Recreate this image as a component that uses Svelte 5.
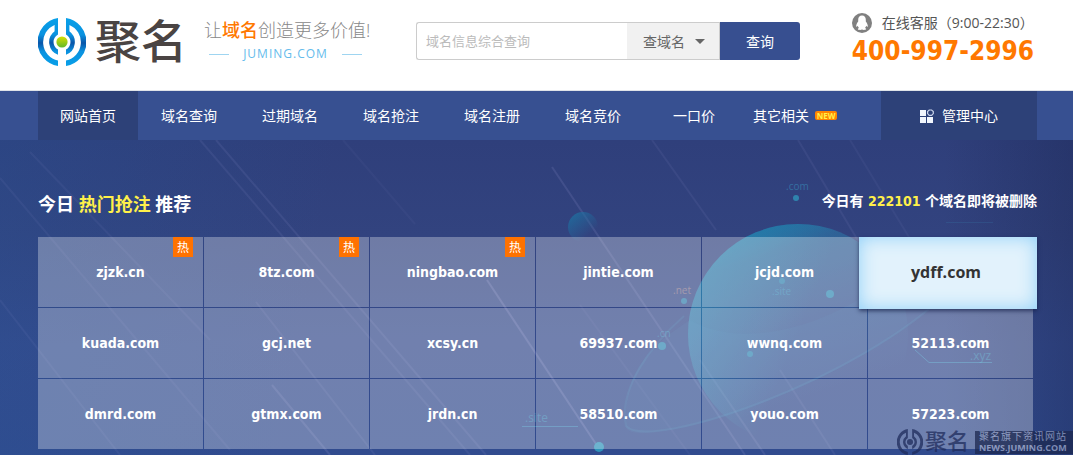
<script lang="ts">
    type Domain = { name: string; hot?: boolean; active?: boolean };

    const menu = ['网站首页', '域名查询', '过期域名', '域名抢注', '域名注册', '域名竞价', '一口价'];

    const domains: Domain[] = [
        { name: 'zjzk.cn', hot: true },
        { name: '8tz.com', hot: true },
        { name: 'ningbao.com', hot: true },
        { name: 'jintie.com' },
        { name: 'jcjd.com' },
        { name: 'ydff.com', active: true },
        { name: 'kuada.com' },
        { name: 'gcj.net' },
        { name: 'xcsy.cn' },
        { name: '69937.com' },
        { name: 'wwnq.com' },
        { name: '52113.com' },
        { name: 'dmrd.com' },
        { name: 'gtmx.com' },
        { name: 'jrdn.cn' },
        { name: '58510.com' },
        { name: 'youo.com' },
        { name: '57223.com' },
    ];

    // light streaks in the banner: x1, y1, x2, y2, opacity
    const streaks = [
        [30, 12, 210, 200, 0.06],
        [0, 38, 230, 310, 0.06],
        [0, 160, 120, 315, 0.06],
        [200, 0, 470, 315, 0.08],
        [216, 0, 486, 315, 0.09],
        [256, 162, 375, 315, 0.08],
        [272, 245, 330, 315, 0.13],
        [343, 0, 415, 84, 0.04],
        [487, 140, 600, 310, 0.18],
        [552, 27, 745, 315, 0.12],
        [652, 0, 716, 90, 0.07],
        [798, 0, 872, 124, 0.07],
        [850, 0, 935, 140, 0.05],
        [700, 220, 765, 315, 0.11],
        [780, 230, 835, 315, 0.08],
        [580, 165, 690, 315, 0.05],
    ];

    let keyword = $state('');
    let kind = $state('domain');
</script>

{#snippet mark()}
    <path d="M20 0 A24.3 24.3 0 0 0 20 48 V42.6 A18.8 18.8 0 0 1 16.6 6.9 V13.2 A13.6 13.6 0 0 0 20 36.8 V31.6 A8.7 8.7 0 0 1 20 16.4 Z" />
    <path d="M28 0 A24.3 24.3 0 0 1 28 48 V42.6 A18.8 18.8 0 0 0 31.4 6.9 V13.2 A13.6 13.6 0 0 1 28 36.8 V31.6 A8.7 8.7 0 0 0 28 16.4 Z" />
{/snippet}

<header class="header">
    <a class="logo" href="#home">
        <svg class="logo-mark" viewBox="0 0 48 48" aria-hidden="true">
            <defs>
                <linearGradient id="ring" x1="0" y1="0" x2="0" y2="48" gradientUnits="userSpaceOnUse">
                    <stop offset="0" stop-color="#08a0e9" />
                    <stop offset="0.35" stop-color="#0a92e0" />
                    <stop offset="0.52" stop-color="#0a55a8" />
                    <stop offset="0.7" stop-color="#0a92e0" />
                    <stop offset="1" stop-color="#08a0e9" />
                </linearGradient>
                <linearGradient id="dot" x1="0" y1="0" x2="0" y2="1">
                    <stop offset="0" stop-color="#d8e000" />
                    <stop offset="1" stop-color="#5fb82c" />
                </linearGradient>
            </defs>
            <g fill="url(#ring)">{@render mark()}</g>
            <circle cx="24" cy="24" r="5.6" fill="url(#dot)" />
        </svg>
        <span class="logo-name">聚名</span>
        <span class="slogan">
            <span class="slogan-text">让<b>域名</b>创造更多价值!</span>
            <span class="slogan-site">JUMING.COM</span>
        </span>
    </a>

    <form class="search" onsubmit={(e) => e.preventDefault()}>
        <input type="text" aria-label="域名信息综合查询" placeholder="域名信息综合查询" bind:value={keyword}>
        <div class="kind">
            <select aria-label="查询类型" bind:value={kind}>
                <option value="domain">查域名</option>
            </select>
        </div>
        <button type="submit">查询</button>
    </form>

    <div class="service">
        <div class="service-line">
            <svg viewBox="0 0 20 20" width="20" height="20" aria-hidden="true">
                <circle cx="10" cy="10" r="10" fill="#808080" />
                <path fill="#fff" d="M10 2.6c-2.5 0-3.8 1.8-3.8 4.2v1.6c-1.1 1.4-2 3.1-2 4.6 0 .9.5 1 .9.6l.7-.8c.2.9.6 1.6 1.2 2.2-.7.3-1.2.7-1.2 1.1 0 .9 2.9 1.2 4.2.5 1.3.7 4.2.4 4.2-.5 0-.4-.5-.8-1.2-1.1.6-.6 1-1.3 1.2-2.2l.7.8c.4.4.9.3.9-.6 0-1.5-.9-3.2-2-4.6V6.8c0-2.4-1.3-4.2-3.8-4.2z" />
            </svg>
            <span>在线客服（9:00-22:30）</span>
        </div>
        <strong>400-997-2996</strong>
    </div>
</header>

<nav class="nav">
    <div class="menu">
        {#each menu as item, i}
            <a href="#menu" class:current={i === 0}>{item}</a>
        {/each}
        <a href="#more">其它相关<span class="new">NEW</span></a>
    </div>
    <a class="manage" href="#manage">
        <svg viewBox="0 0 14 14" width="14" height="14" aria-hidden="true">
            <g fill="#f2f6fd">
                <rect x="0" y="1" width="6" height="6" />
                <rect x="0" y="8" width="6" height="6" />
                <rect x="7" y="8" width="6" height="6" />
            </g>
            <path d="M9.2 1 H11.6 L13.3 2.6 V4.6 L11.6 6.3 H9.2 L7.6 4.6 V2.6 Z" fill="none" stroke="#c9d3ea" stroke-width="1.2" />
        </svg>
        管理中心
    </a>
</nav>

<main class="hero">
    <svg class="scene" viewBox="0 0 1073 315" preserveAspectRatio="xMidYMin slice" aria-hidden="true">
        <defs>
            <linearGradient id="planet" x1="0.4" y1="0" x2="0.65" y2="0.75">
                <stop offset="0" stop-color="#1e71a2" stop-opacity="0.9" />
                <stop offset="0.15" stop-color="#2a80ae" stop-opacity="0.5" />
                <stop offset="0.6" stop-color="#3f8fc0" stop-opacity="0.15" />
                <stop offset="1" stop-color="#3f8fc0" stop-opacity="0" />
            </linearGradient>
            <linearGradient id="planet-edge" x1="0" y1="0.3" x2="0.5" y2="0.5">
                <stop offset="0" stop-color="#2d94bb" stop-opacity="0.5" />
                <stop offset="1" stop-color="#2d94bb" stop-opacity="0" />
            </linearGradient>
            <linearGradient id="moon" x1="0" y1="0" x2="0.8" y2="1">
                <stop offset="0" stop-color="#1e71a2" stop-opacity="0.9" />
                <stop offset="0.8" stop-color="#1e71a2" stop-opacity="0" />
            </linearGradient>
        </defs>
        {#each streaks as [x1, y1, x2, y2, opacity]}
            <line {x1} {y1} {x2} {y2} stroke="#b9b4ee" stroke-width="2" {opacity} />
        {/each}
        <circle cx="583" cy="87" r="15" fill="url(#moon)" />
        <circle cx="798" cy="194" r="110" fill="url(#planet)" />
        <circle cx="798" cy="194" r="110" fill="url(#planet-edge)" />
        <path d="M690 180 C650 206 622 232 626 288 C640 312 850 250 950 150 L900 130 C830 190 740 210 690 180" fill="#3f9fca" opacity="0.08" />
        <path d="M684 176 C650 206 618 250 626 286 C650 312 860 240 950 150" fill="none" stroke="#3f9fca" stroke-width="2" opacity="0.15" />
        <g fill="#2f93ba">
            <circle cx="796" cy="58" r="3" opacity="0.8" />
            <circle cx="684" cy="161" r="3" opacity="0.7" />
            <circle cx="662" cy="206" r="4" opacity="0.8" />
            <circle cx="782" cy="141" r="3" opacity="0.6" />
            <circle cx="830" cy="154" r="4" opacity="0.8" />
            <circle cx="750" cy="214" r="3" opacity="0.7" />
            <circle cx="599" cy="307" r="5" />
        </g>
        <g class="tags">
            <text x="786" y="50">.com</text>
            <text x="673" y="154" class="warm">.net</text>
            <text x="657" y="197">.cn</text>
            <text x="772" y="155">.site</text>
            <text x="525" y="282" class="big">.site</text>
            <text x="970" y="220" class="big">.xyz</text>
        </g>
        <path d="M522 286.500 H578 M915 210 L929 222.500 H992" fill="none" stroke="#3f9fca" opacity="0.5" />
        <path d="M946 82.500 H993" fill="none" stroke="#3f9fca" opacity="0.15" />
    </svg>

    <div class="hero-head">
        <h1>今日 <em>热门抢注</em> 推荐</h1>
        <p>今日有 <em>222101</em> 个域名即将被删除</p>
    </div>

    <div class="grid">
        {#each domains as domain}
            <a class="cell" href="#domain">
                {#if domain.active}
                    <span class="active">{domain.name}</span>
                {:else}
                    {domain.name}
                {/if}
                {#if domain.hot}<i class="hot">热</i>{/if}
            </a>
        {/each}
    </div>

    <div class="watermark">
        <svg viewBox="0 0 48 48" width="26" height="26" aria-hidden="true">
            {@render mark()}
            <circle cx="24" cy="24" r="5.6" />
        </svg>
        <span class="watermark-name">聚名</span>
        <span class="watermark-box">
            <span>聚名旗下资讯网站</span>
            <b>NEWS.JUMING.COM</b>
        </span>
    </div>
</main>

<style>
    :global(body) {
        background: #fff;
        color: #555;
        font-family: "Open Sans", "Noto Sans CJK SC", sans-serif;
        font-size: 14px;
    }

    a {
        color: inherit;
        text-decoration: none;
    }

    em, i {
        font-style: normal;
    }

    .header {
        display: flex;
        align-items: flex-start;
        box-sizing: border-box;
        height: 91px;
        padding: 0 35px 0 38px;
        border-bottom: 1px solid #dfe3e8;
    }

    .logo {
        display: flex;
        align-items: center;
        height: 84px;
        margin-right: 44px;
        white-space: nowrap;
    }

    .logo-mark {
        width: 48px;
        height: 48px;
    }

    .logo-name {
        margin-left: 9px;
        padding-bottom: 4px;
        color: #4a4443;
        font-size: 46px;
        font-weight: 500;
        line-height: 48px;
    }

    .slogan {
        display: flex;
        flex-direction: column;
        width: 168px;
        margin-left: 17px;
        padding-bottom: 2px;
    }

    .slogan-text {
        color: #888;
        font-size: 18px;
        font-weight: 300;
        line-height: 26px;
    }

    .slogan-text b {
        color: #ff7800;
        font-weight: 500;
    }

    .slogan-site {
        display: flex;
        align-items: center;
        justify-content: space-between;
        padding: 0 10px 0 5px;
        color: #65bcec;
        font-size: 12px;
        line-height: 22px;
        letter-spacing: 1px;
    }

    .slogan-site::before,
    .slogan-site::after {
        content: "";
        width: 20px;
        height: 1px;
        background: #9fd5f1;
    }

    .search {
        display: flex;
        flex: 0 1 384px;
        height: 38px;
        margin-top: 22px;
    }

    .search input {
        flex: 1;
        min-width: 0;
        box-sizing: border-box;
        padding: 0 9px;
        border: 1px solid #ccc;
        border-right: 0;
        border-radius: 3px 0 0 3px;
        outline: 0;
        font: inherit;
        font-size: 13px;
    }

    .search input::placeholder {
        color: #bbb;
    }

    .kind {
        position: relative;
        width: 93px;
    }

    .kind select {
        width: 100%;
        height: 100%;
        padding: 0 16px;
        border: 1px solid #ccc;
        border-left: 0;
        border-radius: 0;
        background: #f1f1f1;
        color: #666;
        font: inherit;
        appearance: none;
    }

    .kind::after {
        content: "";
        position: absolute;
        top: 17px;
        right: 15px;
        border: 5px solid transparent;
        border-top-color: #666;
        border-bottom: 0;
        pointer-events: none;
    }

    .search button {
        width: 80px;
        border: 0;
        border-radius: 0 3px 3px 0;
        background: #374f90;
        color: #fff;
        font: inherit;
    }

    .service {
        margin-left: auto;
        padding: 12px 4px 0 0;
        white-space: nowrap;
    }

    .service-line {
        display: flex;
        align-items: center;
        gap: 10px;
        height: 22px;
        line-height: 22px;
    }

    .service strong {
        display: block;
        color: #ff7800;
        font: bold 26px/34px "DejaVu Sans Condensed", "DejaVu Sans", sans-serif;
    }

    .nav {
        display: flex;
        justify-content: space-between;
        height: 49px;
        padding: 0 36px 0 38px;
        background: #375091;
        color: #fff;
        line-height: 49px;
        white-space: nowrap;
    }

    .menu {
        display: flex;
        gap: 1px;
    }

    .menu a {
        display: flex;
        align-items: center;
        justify-content: center;
        width: 100px;
    }

    .menu .current,
    .manage {
        background: #2d4178;
    }

    .new {
        width: 22px;
        margin-left: 6px;
        border-radius: 2px;
        background: #ff8400;
        color: #fff14a;
        font-size: 8px;
        font-weight: bold;
        line-height: 9px;
        text-align: center;
    }

    .manage {
        display: flex;
        align-items: center;
        justify-content: center;
        gap: 8px;
        width: 156px;
    }

    .hero {
        position: relative;
        overflow: hidden;
        padding: 46px 36px 6px 38px;
        background:
            linear-gradient(90deg, transparent 88%, rgba(20, 30, 70, 0.3)),
            linear-gradient(100deg, rgba(38, 84, 150, 0.3), transparent 30%),
            linear-gradient(#2f3f7b, #32437f 30%, #344a8c 65%, #314b8e);
        color: #fff;
    }

    .scene {
        position: absolute;
        inset: 0;
        width: 100%;
        height: 100%;
    }

    .tags {
        fill: #3a9cc4;
        font-size: 10px;
        opacity: 0.5;
    }

    .tags .warm {
        fill: #c99a90;
    }

    .tags .big {
        font-size: 12px;
    }

    .hero-head {
        position: relative;
        display: flex;
        align-items: center;
        justify-content: space-between;
        height: 36px;
        margin-bottom: 15px;
    }

    .hero-head h1 {
        margin: 0 0 2px;
        font-size: 18px;
        font-weight: bold;
    }

    .hero-head p {
        margin: 0 0 6px;
        font-family: "DejaVu Sans Condensed", "Noto Sans CJK SC", sans-serif;
        font-weight: bold;
        line-height: 20px;
    }

    .hero-head em {
        color: #fff04a;
    }

    .grid {
        position: relative;
        display: grid;
        grid-template-columns: repeat(6, 1fr);
        gap: 1px;
        margin-right: 4px;
    }

    .cell {
        position: relative;
        display: flex;
        align-items: center;
        justify-content: center;
        height: 70px;
        background: rgba(255, 255, 255, 0.3);
        font: bold 14px "DejaVu Sans Condensed", "DejaVu Sans", sans-serif;
    }

    .hot {
        position: absolute;
        top: 0;
        right: 10px;
        width: 20px;
        background: #ff7200;
        font: 12px/20px "Noto Sans CJK SC", sans-serif;
        text-align: center;
    }

    .active {
        position: absolute;
        inset: 0 -4px -2px -9px;
        z-index: 1;
        display: flex;
        align-items: center;
        justify-content: center;
        padding: 0 4px 2px 0;
        background: #e2f2fc;
        box-shadow: inset 0 0 18px #8fd0f8, 0 2px 4px rgba(20, 30, 70, 0.7);
        color: #333;
        font: bold 16px "Open Sans", sans-serif;
    }

    .watermark {
        position: absolute;
        right: 0;
        bottom: 0;
        display: flex;
        align-items: center;
        height: 26px;
        color: #1f2c5c;
        fill: #1f2c5c;
        opacity: 0.75;
        white-space: nowrap;
    }

    .watermark-name {
        margin: 0 6px 0 2px;
        padding-bottom: 4px;
        font-size: 22px;
        font-weight: 500;
        line-height: 24px;
    }

    .watermark-box {
        display: flex;
        flex-direction: column;
        width: 94px;
        padding: 0 0 1px 4px;
        background: #1c2850;
        color: #9aa5c8;
        line-height: 11px;
    }

    .watermark-box span {
        font-size: 10px;
        letter-spacing: 1px;
    }

    .watermark-box b {
        font-size: 9px;
    }
</style>
